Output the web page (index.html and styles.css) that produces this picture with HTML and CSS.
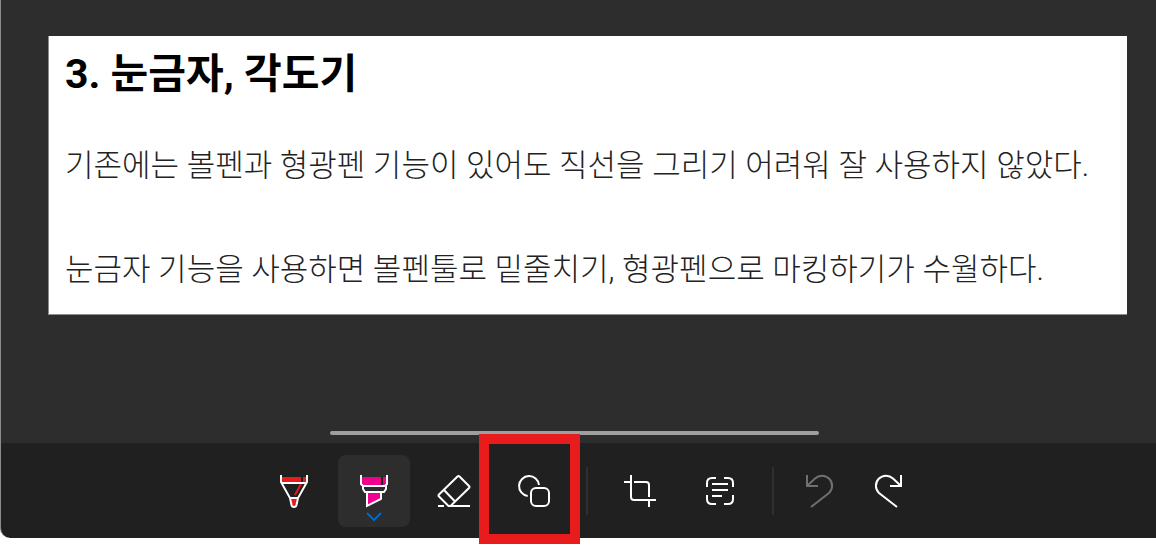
FILE: index.html
```html
<!DOCTYPE html>
<html lang="ko">
<head>
  <meta charset="UTF-8">
  <meta name="viewport" content="width=device-width, initial-scale=1.0">
  <title>캡처 도구</title>
  <link rel="stylesheet" href="styles.css">
</head>
<body>
  <div class="window">
    <main class="canvas">
      <article class="capture">
        <h1>3. 눈금자, 각도기</h1>
        <p>기존에는 볼펜과 형광펜 기능이 있어도 직선을 그리기 어려워 잘 사용하지 않았다.</p>
        <p>눈금자 기능을 사용하면 볼펜툴로 밑줄치기, 형광펜으로 마킹하기가 수월하다.</p>
      </article>
      <div class="scrollbar"></div>
    </main>

    <div class="toolbar" role="toolbar">
      <button class="tool" aria-label="볼펜">
        <svg viewBox="0 0 36 36">
          <path class="red" d="M5 4H31V10H5zM15 26H21L20 33H16z"/>
          <path class="gap" d="M26 4V9"/>
          <path class="red-line" d="M19 22L25 11"/>
          <path d="M5 2V9L14 25L15.500 32Q16 34 18 34Q20 34 20.500 32L22 25L31 9V2M5 10H31M14 25H22"/>
        </svg>
      </button>
      <button class="tool selected" aria-label="형광펜">
        <svg viewBox="0 0 36 36">
          <path class="pink" d="M5 4H31V13H5zM11 20H25V27L11 33z"/>
          <path class="gap" d="M26 4V12"/>
          <path d="M5 2V11L7 13H29L31 11V2M7 13V16L9 19H28L30 16V13M11 19V33L25 26V19"/>
          <path class="chevron" d="M11 40L18 47L25 40"/>
        </svg>
      </button>
      <button class="tool" aria-label="지우개">
        <svg viewBox="0 0 36 36">
          <path d="M21.500 3.500Q22.500 2.500 23.500 3.500L33 13Q34 14 33 15L14.500 33H12.500L3 23.500Q2 22.500 3 21.500zM8 17L19 28.500M2 33H8M12 33H34"/>
        </svg>
      </button>
      <button class="tool marked" aria-label="도형">
        <svg viewBox="0 0 36 36">
          <path d="M23 12A10 10 0 1 0 11.700 23"/>
          <rect x="15" y="15" width="18" height="18" rx="5"/>
        </svg>
      </button>
      <span class="divider"></span>
      <button class="tool" aria-label="자르기">
        <svg viewBox="0 0 36 36">
          <path d="M9 2V24Q9 27 12 27H34M2 9H9M12 9H24Q27 9 27 12V24M27 27V34"/>
        </svg>
      </button>
      <button class="tool" aria-label="텍스트 작업">
        <svg viewBox="0 0 36 36">
          <path d="M5 14V10Q5 5 10 5H14M22 5H26Q31 5 31 10V14M31 22V26Q31 31 26 31H22M14 31H10Q5 31 5 26V22M10 11H26M10 17H26M10 23H20"/>
        </svg>
      </button>
      <span class="divider"></span>
      <button class="tool narrow" aria-label="실행 취소" disabled>
        <svg viewBox="0 0 36 36">
          <path d="M4 2V13H15M4 13L12 5.500A10 10 0 0 1 26 20L8 34"/>
        </svg>
      </button>
      <button class="tool narrow" aria-label="다시 실행">
        <svg viewBox="0 0 36 36">
          <path d="M28 2V13H17M28 13L20 5.500A10 10 0 0 0 6 20L24 34"/>
        </svg>
      </button>
    </div>
  </div>
</body>
</html>
```
FILE: styles.css
```css
:root {
  --canvas-color: #2d2d2d;
  --bar-color: #202020;
  --line-color: #8c8c8c;
  --mark-color: #e81c1c;
}

*,
*::after {
  box-sizing: border-box;
}

body {
  margin: 0;
  min-height: 100vh;
  display: flex;
  flex-direction: column;
  padding-bottom: 7px;
  background: #fff;
  font-family: Roboto, "Noto Sans CJK KR", sans-serif;
}

.window {
  flex: 1;
  display: flex;
  flex-direction: column;
  background: var(--bar-color);
  border-left: 1px solid var(--line-color);
  border-bottom-left-radius: 10px;
}

.canvas {
  flex: 1;
  display: flex;
  flex-direction: column;
  align-items: center;
  justify-content: space-between;
  padding: 36px 29px 8px 47px;
  background: var(--canvas-color);
}

.capture {
  width: 100%;
  padding: 8px 16px 18px;
  background: #fff;
  border: solid var(--line-color);
  border-width: 0 0 1px 1px;
}

h1 {
  margin: 0 0 36px;
  font-size: 41px;
  line-height: 60px;
  font-weight: 700;
  color: #000;
}

p {
  margin: 0;
  font-size: 31px;
  line-height: 52px;
  font-weight: 300;
  color: #222;
}

p + p {
  margin-top: 52px;
}

.scrollbar {
  width: 489px;
  max-width: 100%;
  height: 4px;
  margin-right: 26px;
  border-radius: 2px;
  background: #9f9f9f;
}

.toolbar {
  display: flex;
  justify-content: center;
  gap: 8px;
  padding: 12px 0 11px 22px;
}

.tool {
  position: relative;
  display: flex;
  align-items: center;
  justify-content: center;
  width: 72px;
  height: 72px;
  padding: 0;
  background: transparent;
  border: none;
  border-radius: 8px;
  color: #fff;
  cursor: pointer;
}

.tool.narrow {
  width: 62px;
}

.tool.selected {
  background: var(--canvas-color);
}

.tool:disabled {
  color: #707070;
  cursor: default;
}

/* red frame over the shapes button */
.marked::after {
  content: "";
  position: absolute;
  top: -21px;
  left: -19px;
  width: 101px;
  height: 110px;
  border: 10px solid var(--mark-color);
}

.divider {
  width: 2px;
  height: 48px;
  margin: 0 8px;
  align-self: center;
  background: #2f2f2f;
}

svg {
  width: 36px;
  height: 36px;
  overflow: visible;
  fill: none;
  stroke: currentColor;
  stroke-width: 2;
}

.red {
  fill: #e81c1c;
  stroke: none;
}

.pink {
  fill: #f0008c;
  stroke: none;
}

.gap {
  stroke: var(--bar-color);
}

.red-line {
  stroke: #e81c1c;
}

.chevron {
  stroke: #0067d4;
}
```
